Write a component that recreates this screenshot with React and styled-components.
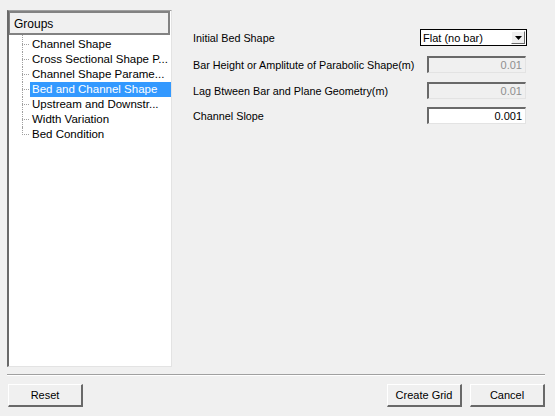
import React from 'react';
import styled, { createGlobalStyle } from 'styled-components';

const GlobalStyle = createGlobalStyle`
    html, body {
        margin: 0;
        padding: 0;
        background: #f0f0f0;
    }
    body {
        font-family: "Liberation Sans", Arial, sans-serif;
        font-size: 11px;
        color: #000;
    }
`;

const Dialog = styled.div`
    width: 555px;
    height: 416px;
    background: #f0f0f0;
    display: flex;
    flex-direction: column;
    box-sizing: border-box;
`;

const Body = styled.div`
    display: flex;
    padding: 10px 0 0 7px;
    height: 367px;
    box-sizing: border-box;
`;

const TreePanel = styled.div`
    width: 165px;
    height: 357px;
    box-sizing: border-box;
    background: #fff;
    border-left: 2px solid #696969;
    border-top: 1px solid #a0a0a0;
    border-right: 1px solid #e3e3e3;
    border-bottom: 1px solid #e3e3e3;
    display: flex;
    flex-direction: column;
`;

const TreeHeader = styled.div`
    height: 24px;
    box-sizing: border-box;
    background: #f0f0f0;
    border: 2px solid #828282;
    border-left-width: 1px;
    margin-right: 1px;
    padding: 4px 0 0 4px;
    font-size: 12px;
`;

const TreeList = styled.ul`
    list-style: none;
    margin: 2px 0 0 0;
    padding: 0 0 0 13px;
`;

const TreeItem = styled.li`
    display: flex;
    align-items: center;
    height: 15px;
    position: relative;
    &::before {
        content: '';
        width: 7px;
        border-top: 1px dotted #a0a0a0;
        margin-right: 1px;
        flex-shrink: 0;
    }
    &::after {
        content: '';
        position: absolute;
        left: 0;
        top: ${p => (p.$first ? '-2px' : '0')};
        height: ${p => (p.$last ? '8px' : p.$first ? '17px' : '15px')};
        border-left: 1px dotted #a0a0a0;
    }
`;

const ItemText = styled.span`
    flex: 1;
    height: 15px;
    line-height: 15px;
    padding-left: 2px;
    white-space: nowrap;
    overflow: hidden;
    font-size: 11.5px;
    background: ${p => (p.$selected ? '#3399ff' : 'transparent')};
    color: ${p => (p.$selected ? '#fff' : '#000')};
`;

const FormPanel = styled.div`
    flex: 1;
    padding: 19px 28px 0 21px;
    display: flex;
    flex-direction: column;
`;

const FormRow = styled.div`
    display: flex;
    align-items: center;
    justify-content: space-between;
    height: 17px;
    margin-bottom: ${p => p.$gap || 9}px;
`;

const Label = styled.span`
    white-space: nowrap;
    font-size: 10.8px;
`;

const Combo = styled.div`
    width: 107px;
    height: 17px;
    box-sizing: border-box;
    background: #fff;
    border: 1px solid #000;
    display: flex;
    align-items: center;
    padding-left: 2px;
    justify-content: space-between;
`;

const ComboButton = styled.div`
    width: 14px;
    height: 13px;
    margin-right: 1px;
    box-sizing: border-box;
    background: #f0f0f0;
    border-top: 1px solid #fff;
    border-left: 1px solid #fff;
    border-right: 1px solid #696969;
    border-bottom: 1px solid #696969;
    display: flex;
    align-items: center;
    justify-content: center;
`;

const NumberBox = styled.div`
    width: 99px;
    height: 17px;
    margin-right: 1px;
    box-sizing: border-box;
    background: ${p => (p.$disabled ? '#f0f0f0' : '#fff')};
    color: ${p => (p.$disabled ? '#8f8f8f' : '#000')};
    border-top: 2px solid #696969;
    border-left: 2px solid #696969;
    border-right: 1px solid #e3e3e3;
    border-bottom: 1px solid #e3e3e3;
    text-align: right;
    padding-right: 3px;
    line-height: 14px;
`;

const Separator = styled.div`
    margin: 7px 10px 0 7px;
    border-top: 1px solid #a0a0a0;
    border-bottom: 1px solid #fff;
`;

const ButtonBar = styled.div`
    display: flex;
    padding: 8px 10px 0 8px;
    gap: 8px;
`;

const Spacer = styled.div`
    flex: 1;
`;

const Button = styled.button`
    width: 75px;
    height: 23px;
    box-sizing: border-box;
    background: #f0f0f0;
    font-family: "Liberation Sans", Arial, sans-serif;
    font-size: 11px;
    color: #000;
    border-top: 1px solid #fff;
    border-left: 1px solid #fff;
    border-right: 2px solid #696969;
    border-bottom: 2px solid #696969;
    padding: 0;
`;

const groups = [
    'Channel Shape',
    'Cross Sectional Shape P...',
    'Channel Shape Parame...',
    'Bed and Channel Shape',
    'Upstream and Downstr...',
    'Width Variation',
    'Bed Condition',
];

export default function App() {
    return (
        <Dialog>
            <GlobalStyle />
            <Body>
                <TreePanel>
                    <TreeHeader>Groups</TreeHeader>
                    <TreeList>
                        {groups.map((g, i) => (
                            <TreeItem key={g} $first={i === 0} $last={i === groups.length - 1}>
                                <ItemText $selected={i === 3}>{g}</ItemText>
                            </TreeItem>
                        ))}
                    </TreeList>
                </TreePanel>
                <FormPanel>
                    <FormRow $gap={10}>
                        <Label>Initial Bed Shape</Label>
                        <Combo>
                            <span>Flat (no bar)</span>
                            <ComboButton>
                                <svg width="7" height="4" viewBox="0 0 7 4">
                                    <path d="M0 0 H7 L3.5 4 Z" fill="#000" />
                                </svg>
                            </ComboButton>
                        </Combo>
                    </FormRow>
                    <FormRow>
                        <Label>Bar Height or Amplitute of Parabolic Shape(m)</Label>
                        <NumberBox $disabled>0.01</NumberBox>
                    </FormRow>
                    <FormRow $gap={8}>
                        <Label>Lag Btween Bar and Plane Geometry(m)</Label>
                        <NumberBox $disabled>0.01</NumberBox>
                    </FormRow>
                    <FormRow>
                        <Label>Channel Slope</Label>
                        <NumberBox>0.001</NumberBox>
                    </FormRow>
                </FormPanel>
            </Body>
            <Separator />
            <ButtonBar>
                <Button>Reset</Button>
                <Spacer />
                <Button>Create Grid</Button>
                <Button>Cancel</Button>
            </ButtonBar>
        </Dialog>
    );
}
